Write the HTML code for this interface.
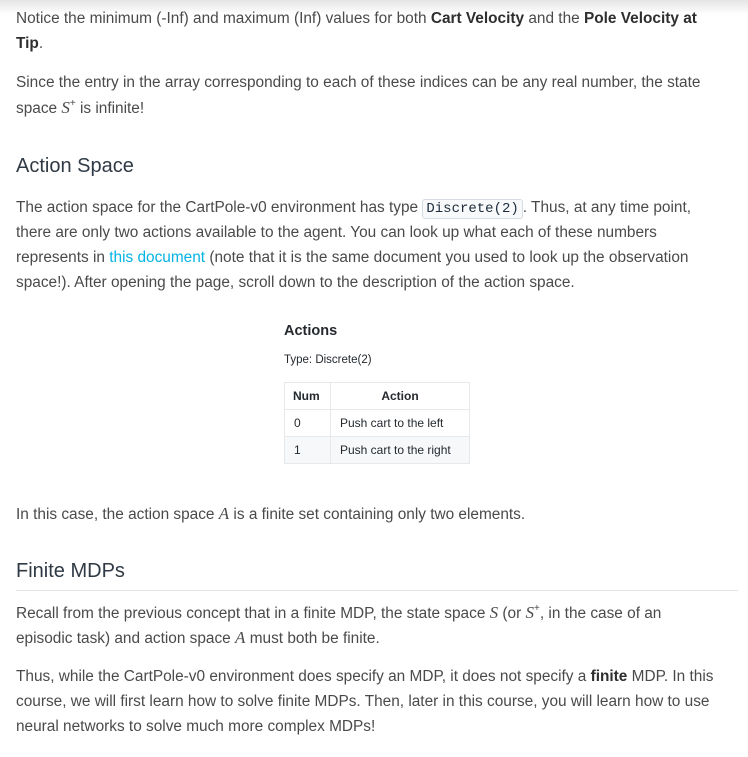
<!DOCTYPE html>
<html><head><meta charset="utf-8"><style>
body{margin:0;width:748px;height:757px;background:#fff;position:relative;overflow:hidden;font-family:"Liberation Sans",sans-serif;color:#4a4a4a;}
.top{position:absolute;left:0;top:0;width:748px;height:14px;background:linear-gradient(#e4e4e4,#fff);}
.l{position:absolute;left:16px;font-size:15.4px;line-height:25px;white-space:nowrap;}
b{color:#2e2e2e}
.h{position:absolute;left:16px;font-size:20px;color:#2f3a45;white-space:nowrap;line-height:26px}
.m{font-family:"Liberation Serif",serif;font-style:italic;font-size:17px}
.sp{font-size:10px;position:relative;top:-7px;line-height:0}
code{font-family:"Liberation Mono",monospace;font-size:14px;color:#1d2b3a;border:1px solid #d6dce2;background:#f7f9fa;border-radius:3px;padding:1px 3px}
a{color:#02b3e4;text-decoration:none}
.s{position:absolute;font-size:12px;color:#24292e;white-space:nowrap}
.cell{position:absolute;border:1px solid #e6e8ea;font-size:12px;color:#24292e;line-height:26px;box-sizing:border-box;padding-left:9px}
</style></head><body>
<div class="top"></div>
<div class="l" style="top:6px">Notice the minimum (-Inf) and maximum (Inf) values for both <b>Cart Velocity</b> and the <b>Pole Velocity at</b></div>
<div class="l" style="top:31px"><b>Tip</b>.</div>
<div class="l" style="top:70px">Since the entry in the array corresponding to each of these indices can be any real number, the state</div>
<div class="l" style="top:95px">space <span class="m">S</span><span class="sp">+</span> is infinite!</div>
<div class="h" style="top:153px">Action Space</div>
<div class="l" style="top:195px">The action space for the CartPole-v0 environment has type <code>Discrete(2)</code>. Thus, at any time point,</div>
<div class="l" style="top:220px">there are only two actions available to the agent. You can look up what each of these numbers</div>
<div class="l" style="top:245px">represents in <a>this document</a> (note that it is the same document you used to look up the observation</div>
<div class="l" style="top:270px">space!). After opening the page, scroll down to the description of the action space.</div>
<div class="s" style="left:284px;top:323px;font-size:14.5px;font-weight:bold">Actions</div>
<div class="s" style="left:284px;top:354px;font-size:11.5px">Type: Discrete(2)</div>
<div class="cell" style="left:284px;top:382px;width:47px;height:28px;font-weight:bold;padding-left:8px">Num</div>
<div class="cell" style="left:330px;top:382px;width:140px;height:28px;font-weight:bold;text-align:center;padding:0">Action</div>
<div class="cell" style="left:284px;top:409px;width:47px;height:28px">0</div>
<div class="cell" style="left:330px;top:409px;width:140px;height:28px">Push cart to the left</div>
<div class="cell" style="left:284px;top:436px;width:47px;height:28px;background:#f6f8fa">1</div>
<div class="cell" style="left:330px;top:436px;width:140px;height:28px;background:#f6f8fa">Push cart to the right</div>
<div class="l" style="top:501px">In this case, the action space <span class="m">A</span> is a finite set containing only two elements.</div>
<div class="h" style="top:558px">Finite MDPs</div>
<div style="position:absolute;left:16px;top:590px;width:722px;height:1px;background:#e3e6e8"></div>
<div class="l" style="top:600px">Recall from the previous concept that in a finite MDP, the state space <span class="m">S</span> (or <span class="m">S</span><span class="sp">+</span>, in the case of an</div>
<div class="l" style="top:625px">episodic task) and action space <span class="m">A</span> must both be finite.</div>
<div class="l" style="top:664px">Thus, while the CartPole-v0 environment does specify an MDP, it does not specify a <b>finite</b> MDP. In this</div>
<div class="l" style="top:689px">course, we will first learn how to solve finite MDPs. Then, later in this course, you will learn how to use</div>
<div class="l" style="top:714px">neural networks to solve much more complex MDPs!</div>
</body></html>
